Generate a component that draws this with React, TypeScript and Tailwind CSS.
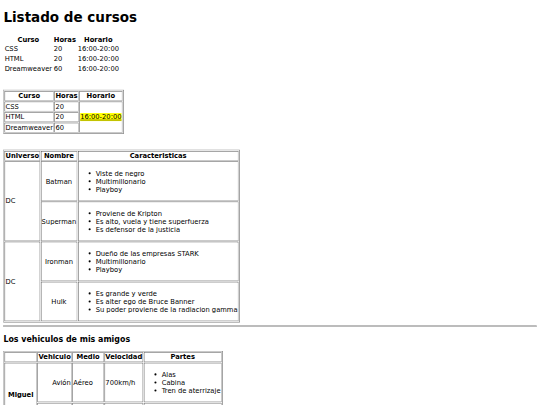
import React from "react";

const cell = "[border:1px_inset_gray] p-px";
const head = "[border:1px_inset_gray] p-px font-bold text-center";
const boxed = "[border:1px_outset_gray] border-separate border-spacing-[2px]";
const plain = "border-separate border-spacing-[2px]";
const list = "list-disc pl-10 my-4";

const cursos = [
  { curso: "CSS", horas: 20 },
  { curso: "HTML", horas: 20 },
  { curso: "Dreamweaver", horas: 60 },
];

const heroes = [
  {
    nombre: "Batman",
    rasgos: ["Viste de negro", "Multimillonario", "Playboy"],
  },
  {
    nombre: "Superman",
    rasgos: ["Proviene de Kripton", "Es alto, vuela y tiene superfuerza", "Es defensor de la justicia"],
  },
  {
    nombre: "Ironman",
    rasgos: ["Dueño de las empresas STARK", "Multimillonario", "Playboy"],
  },
  {
    nombre: "Hulk",
    rasgos: ["Es grande y verde", "Es alter ego de Bruce Banner", "Su poder proviene de la radiacion gamma"],
  },
];

export default function App() {
  return (
    <div className="w-[540px] h-[405px] overflow-hidden bg-white">
      <div className="w-[1280px] flow-root px-2 origin-top-left scale-[0.421875] font-['DejaVu_Sans',sans-serif] text-base leading-[normal] text-black">
        <h1 className="text-[32px] font-bold my-[21.44px]">Listado de cursos</h1>

        <table className={plain}>
          <thead>
            <tr>
              <th className="p-px font-bold text-center">Curso</th>
              <th className="p-px font-bold text-center">Horas</th>
              <th className="p-px font-bold text-center">Horario</th>
            </tr>
          </thead>
          <tbody>
            {cursos.map((c) => (
              <tr key={c.curso}>
                <td className="p-px">{c.curso}</td>
                <td className="p-px">{c.horas}</td>
                <td className="p-px">16:00-20:00</td>
              </tr>
            ))}
          </tbody>
        </table>

        <br />
        <br />

        <table className={boxed}>
          <thead>
            <tr>
              <th className={head}>Curso</th>
              <th className={head}>Horas</th>
              <th className={head}>Horario</th>
            </tr>
          </thead>
          <tbody>
            <tr>
              <td className={cell}>CSS</td>
              <td className={cell}>20</td>
              <td className={cell} rowSpan={3}>
                <mark className="bg-[yellow] text-black underline">16:00-20:00</mark>
              </td>
            </tr>
            <tr>
              <td className={cell}>HTML</td>
              <td className={cell}>20</td>
            </tr>
            <tr>
              <td className={cell}>Dreamweaver</td>
              <td className={cell}>60</td>
            </tr>
          </tbody>
        </table>

        <br />
        <br />

        <table className={boxed}>
          <thead>
            <tr>
              <th className={head}>Universo</th>
              <th className={head}>Nombre</th>
              <th className={head}>Caracteristicas</th>
            </tr>
          </thead>
          <tbody>
            {heroes.map((h, i) => (
              <tr key={h.nombre}>
                {i % 2 === 0 && (
                  <td className={cell} rowSpan={2}>
                    DC
                  </td>
                )}
                <td className={`${cell} text-center`}>{h.nombre}</td>
                <td className={cell}>
                  <ul className={list}>
                    {h.rasgos.map((r) => (
                      <li key={r}>{r}</li>
                    ))}
                  </ul>
                </td>
              </tr>
            ))}
          </tbody>
        </table>

        <hr className="my-2 h-0 [border:1px_inset_gray]" />

        <h3 className="text-[18.72px] font-bold my-[18.72px]">Los vehiculos de mis amigos</h3>

        <table className={boxed}>
          <thead>
            <tr>
              <th className={head}></th>
              <th className={head}>Vehiculo</th>
              <th className={head}>Medio</th>
              <th className={head}>Velocidad</th>
              <th className={head}>Partes</th>
            </tr>
          </thead>
          <tbody>
            <tr>
              <th className={head} rowSpan={2}>
                Miguel
              </th>
              <td className={`${cell} text-right`}>Avión</td>
              <td className={cell}>Aéreo</td>
              <td className={cell}>700km/h</td>
              <td className={cell}>
                <ul className={list}>
                  <li>Alas</li>
                  <li>Cabina</li>
                  <li>Tren de aterrizaje</li>
                </ul>
              </td>
            </tr>
            <tr className="align-bottom">
              <td className={`${cell} text-right`}>Coche</td>
              <td className={cell}>Terrestre</td>
              <td className={cell}>120km/h</td>
              <td className={cell}>
                <ul className={list}>
                  <li>Ruedas</li>
                </ul>
              </td>
            </tr>
            <tr>
              <th className={head}>Roberto</th>
              <td className={`${cell} text-right`}>Barco</td>
              <td className={cell}>Acuático</td>
              <td className={cell}>40km/h</td>
              <td className={cell}>
                <ul className={list}>
                  <li>Casco</li>
                </ul>
              </td>
            </tr>
          </tbody>
        </table>
      </div>
    </div>
  );
}
